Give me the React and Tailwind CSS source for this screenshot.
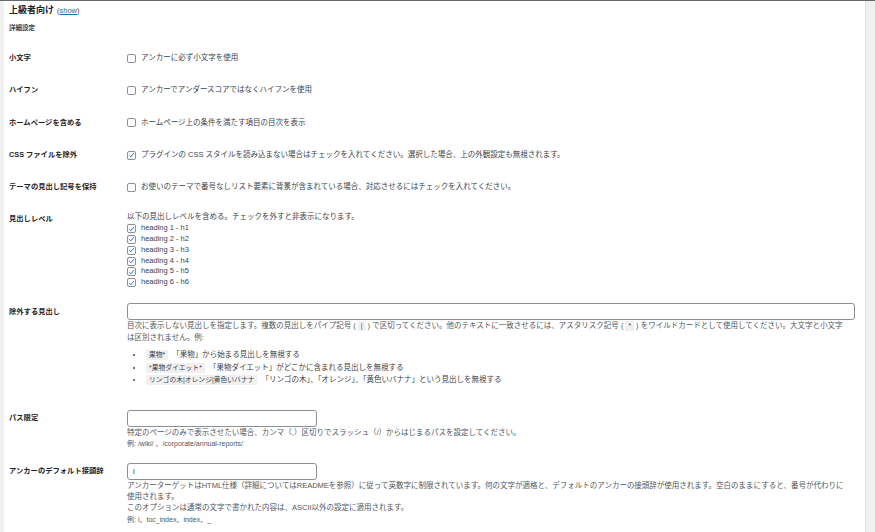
import { useState } from "react";

const FONT = { fontFamily: '"Liberation Sans", "Noto Sans CJK JP", sans-serif' };

function Box({ checked }) {
    return (
        <span className="inline-flex items-center justify-center w-[9px] h-[9px] border border-[#8c8f94] rounded-[2px] bg-white shrink-0">
            {checked && (
                <svg viewBox="0 0 10 10" className="w-[8px] h-[8px]">
                    <path d="M1.8 5.2 L4.2 7.5 L8.4 2.3" fill="none" stroke="#2271b1" strokeWidth="1.4" />
                </svg>
            )}
        </span>
    );
}

function Code({ children }) {
    return <code className="inline-block align-middle bg-[#f0f0f1] px-[3px] mx-[2px] text-[6.8px] leading-[10px] text-[#3c434a]" style={FONT}>{children}</code>;
}

function Row({ label, pt = "pt-[11px]", pb = "pb-[11px]", children }) {
    return (
        <div className="flex items-start">
            <div className={`w-[118px] shrink-0 ${pt} ${pb} text-[7.3px] leading-[10.3px] font-bold text-[#1d2327]`}>{label}</div>
            <div className="flex-1">{children}</div>
        </div>
    );
}

function CheckRow({ label, text, checked }) {
    return (
        <Row label={label}>
            <div className="pt-[11px] pb-[11px] flex items-center gap-[5px] text-[7.5px] leading-[10.3px] text-[#3c434a]">
                <Box checked={checked} />
                <span>{text}</span>
            </div>
        </Row>
    );
}

export default function App() {
    const [levels] = useState([1, 2, 3, 4, 5, 6]);

    return (
        <div className="w-[875px] h-[532px] overflow-hidden bg-[#f0f0f1] border-t border-[#646970] flex" style={FONT}>
            <div className="w-[4px] shrink-0" />
            <div className="w-[862px] shrink-0 bg-white px-[5px] border-r border-[#e2e4e7]">
                <div className="pt-[3px] flex items-baseline gap-[3px]">
                    <span className="text-[9px] leading-[13px] font-bold text-[#1d2327]">上級者向け</span>
                    <span className="text-[7.5px] text-[#3c434a]">(<span className="text-[#2271b1] underline">show</span>)</span>
                </div>
                <div className="mt-[6px] text-[6.5px] leading-[9px] font-bold text-[#3c434a]">詳細設定</div>
                <div className="h-[10px]" />

                <CheckRow label="小文字" text="アンカーに必ず小文字を使用" />
                <CheckRow label="ハイフン" text="アンカーでアンダースコアではなくハイフンを使用" />
                <CheckRow label="ホームページを含める" text="ホームページ上の条件を満たす項目の目次を表示" />
                <CheckRow label="CSS ファイルを除外" checked text="プラグインの CSS スタイルを読み込まない場合はチェックを入れてください。選択した場合、上の外観設定も無視されます。" />
                <CheckRow label="テーマの見出し記号を保持" text="お使いのテーマで番号なしリスト要素に背景が含まれている場合、対応させるにはチェックを入れてください。" />

                <Row label="見出しレベル">
                    <div className="pt-[9px] pb-[8px] text-[7.5px] leading-[10.8px] text-[#3c434a]">
                        <div>以下の見出しレベルを含める。チェックを外すと非表示になります。</div>
                        {levels.map((n) => (
                            <div key={n} className="flex items-center gap-[5px]">
                                <Box checked />
                                <span>heading {n} - h{n}</span>
                            </div>
                        ))}
                    </div>
                </Row>

                <Row label="除外する見出し">
                    <div className="pt-[7px] pb-[15px] text-[7.5px] text-[#50575e]">
                        <div className="h-[17px] w-[728px] border border-[#8c8f94] rounded-[3px] bg-white" />
                        <p className="leading-[12px] w-[722px]">
                            目次に表示しない見出しを指定します。複数の見出しをパイプ記号 (<Code>|</Code>) で区切ってください。他のテキストに一致させるには、アスタリスク記号 (<Code>*</Code>) をワイルドカードとして使用してください。大文字と小文字は区別されません。例:
                        </p>
                        <ul className="mt-[5px] pl-[17px] list-disc leading-[12.5px] text-[#3c434a]">
                            <li><Code>果物*</Code> 「果物」から始まる見出しを無視する</li>
                            <li><Code>*果物ダイエット*</Code> 「果物ダイエット」がどこかに含まれる見出しを無視する</li>
                            <li><Code>リンゴの木|オレンジ|黄色いバナナ</Code> 「リンゴの木」、「オレンジ」、「黄色いバナナ」という見出しを無視する</li>
                        </ul>
                    </div>
                </Row>

                <Row label="パス限定">
                    <div className="pt-[8px] pb-[5px] text-[7.5px] leading-[11.5px] text-[#50575e]">
                        <div className="h-[17px] w-[190px] border border-[#8c8f94] rounded-[3px] bg-white" />
                        <p>特定のページのみで表示させたい場合、カンマ（,）区切りでスラッシュ（/）からはじまるパスを設定してください。</p>
                        <p className="text-[7px]">例: /wiki/ 、/corporate/annual-reports/</p>
                    </div>
                </Row>

                <Row label="アンカーのデフォルト接頭辞">
                    <div className="pt-[8px] text-[7.5px] leading-[11px] text-[#50575e]">
                        <div className="h-[17px] w-[190px] border border-[#8c8f94] rounded-[3px] bg-white flex items-center px-[5px] text-[7.5px] text-[#1d2327]">i</div>
                        <p className="w-[722px]">アンカーターゲットはHTML仕様（詳細についてはREADMEを参照）に従って英数字に制限されています。何の文字が適格と、デフォルトのアンカーの接頭辞が使用されます。空白のままにすると、番号が代わりに使用されます。</p>
                        <p>このオプションは通常の文字で書かれた内容は、ASCII以外の設定に適用されます。</p>
                        <p className="mt-[1px] text-[7px]">例: i、toc_index、index、_</p>
                    </div>
                </Row>
            </div>
            <div className="flex-1" />
        </div>
    );
}
